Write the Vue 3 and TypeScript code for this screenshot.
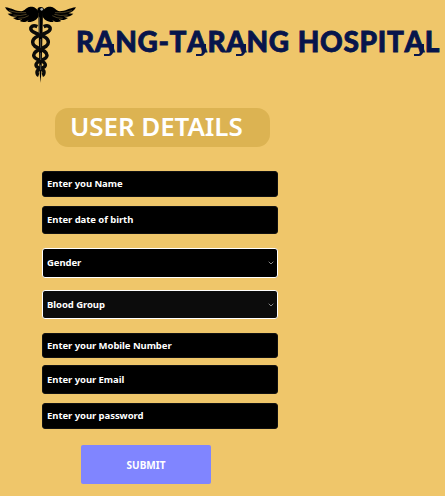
<script setup lang="ts">
import { ref } from 'vue'

interface Field {
  label: string
  kind: 'text' | 'select'
  name: string
}

const fields: Field[] = [
  { label: 'Enter you Name', kind: 'text', name: 'name' },
  { label: 'Enter date of birth', kind: 'text', name: 'birth' },
  { label: 'Gender', kind: 'select', name: 'gender' },
  { label: 'Blood Group', kind: 'select', name: 'blood' },
  { label: 'Enter your Mobile Number', kind: 'text', name: 'mobile' },
  { label: 'Enter your Email', kind: 'text', name: 'email' },
  { label: 'Enter your password', kind: 'text', name: 'password' },
]

const hospital = ref('RANG-TARANG HOSPITAL')
const wing = 'M116 38C112 24 100 19 88 21C78 23 74 33 64 34C46 34 37 24 15 22C20 32 29 38 38 40L23 41C31 49 42 51 52 50L39 54C47 60 57 62 67 58L59 63C69 68 80 67 86 59L82 66C98 68 112 59 116 48Z'
const feathers = 'M27 32Q53 41 78 38M40 45Q62 49 80 43M55 55Q74 55 86 47'
</script>

<template>
  <main class="page">
    <header class="header">
      <svg class="logo" viewBox="0 0 240 255" aria-hidden="true">
        <g>
          <path :d="wing" />
          <path class="cut" :d="feathers" />
        </g>
        <g transform="translate(243 0) scale(-1 1)">
          <path :d="wing" />
          <path class="cut" :d="feathers" />
        </g>
        <path class="rod" d="M115 34H129L125 205L121.500 249L118 205Z" />
        <path class="snake" d="M112 80C95 72 85 87 99 95C121 107 145 109 145 127C145 148 101 145 101 166C101 184 136 178 136 195C136 208 111 202 111 216Q111 224 116 226" />
        <path class="snake" d="M131 80C148 72 158 87 144 95C122 107 98 109 98 127C98 148 141 145 141 166C141 184 108 178 108 195C108 208 132 202 132 216Q132 224 127 226" />
        <circle cx="122" cy="31" r="10" />
        <circle class="shine" cx="125" cy="28" r="4" />
        <path class="highlight" d="M118 52V100M122 117V143M122 158V180M122 194V210" />
      </svg>
      <h1 class="title"><span v-for="(letter, index) in hospital" :key="index" :class="{ swash: letter === 'A', space: letter === ' ' }">{{ letter }}</span></h1>
    </header>

    <form class="form" @submit.prevent>
      <h2 class="heading">USER DETAILS</h2>
      <template v-for="field in fields" :key="field.name">
        <input v-if="field.kind === 'text'" :class="['field', field.name]" type="text" :placeholder="field.label" :aria-label="field.label" />
        <div v-else :class="['field', 'select', field.name]" role="combobox" tabindex="0">
          <span>{{ field.label }}</span>
          <svg class="chevron" viewBox="0 0 6 4" aria-hidden="true"><path d="M.7.7 3 3 5.300.7" /></svg>
        </div>
      </template>
      <button class="submit" type="submit">SUBMIT</button>
    </form>
  </main>
</template>

<style>
body {
  background: #efc66a;
}
</style>

<style scoped>
* {
  box-sizing: border-box;
}

.page {
  height: 496px;
  overflow: hidden;
  background: #efc66a;
  font-family: "Noto Sans", sans-serif;
}

.header {
  height: 108px;
  display: flex;
  align-items: flex-start;
}

.logo {
  width: 80px;
  height: 85px;
  flex: none;
}

.logo .cut {
  fill: none;
  stroke: #a98c4c;
  stroke-width: 1.3;
}

.logo .snake {
  fill: none;
  stroke: #0b0b09;
  stroke-width: 10.5;
}

.logo .highlight {
  fill: none;
  stroke: #777264;
  stroke-width: 2;
}

.logo .shine {
  fill: #adb1ae;
}

.title {
  flex: none;
  display: flex;
  margin: 24px 0 0 -4px;
  color: #07154b;
  font-family: Lato, sans-serif;
  font-size: 28px;
  font-weight: 900;
  line-height: 34px;
  letter-spacing: 0.65px;
  -webkit-text-stroke: 0.8px #07154b;
}

.space {
  width: 8px;
}

.swash {
  position: relative;
}

.swash::after {
  content: "";
  position: absolute;
  right: 1px;
  top: 20px;
  width: 6px;
  height: 10px;
  border-right: 4px solid #07154b;
  border-bottom: 2px solid #07154b;
  border-bottom-right-radius: 5px 8px;
}

.form {
  width: 236px;
  margin-left: 42px;
  display: flex;
  flex-direction: column;
}

.heading {
  width: 215px;
  height: 39px;
  margin: 0 0 24px 13px;
  padding-left: 15px;
  border-radius: 13px;
  background: #dcb352;
  color: #fff;
  font-size: 26px;
  font-weight: 600;
  line-height: 37px;
  letter-spacing: -0.1px;
  white-space: nowrap;
}

.field {
  width: 100%;
  height: 26px;
  margin: 0 0 9px;
  padding: 0 4px;
  border: 1px solid #111;
  border-radius: 3px;
  outline: none;
  background: #000;
  color: #fff;
  font: 700 9.5px/16px "Noto Sans", sans-serif;
  letter-spacing: -0.06px;
}

.field::placeholder {
  color: #fff;
  opacity: 1;
}

.name,
.birth,
.password {
  padding-bottom: 2px;
}

.birth {
  height: 28px;
  margin-bottom: 14px;
}

.select {
  display: flex;
  align-items: center;
  justify-content: space-between;
  border-color: #fff;
}

.gender {
  height: 30px;
  margin-bottom: 12px;
}

.blood {
  height: 29px;
  margin-bottom: 14px;
  background: #0c0c0c;
}

.mobile {
  height: 25px;
  margin-bottom: 7px;
}

.email {
  height: 29px;
}

.chevron {
  width: 6px;
  height: 4px;
  margin-right: -1px;
  fill: none;
  stroke: #858585;
  stroke-width: 1;
}

.password {
  margin-bottom: 16px;
}

.submit {
  width: 130px;
  height: 39px;
  margin-left: 39px;
  padding: 0;
  border: 0;
  border-radius: 2px;
  background: #8085ff;
  color: #fff;
  font: 700 10px/16px "Noto Sans", sans-serif;
}
</style>
